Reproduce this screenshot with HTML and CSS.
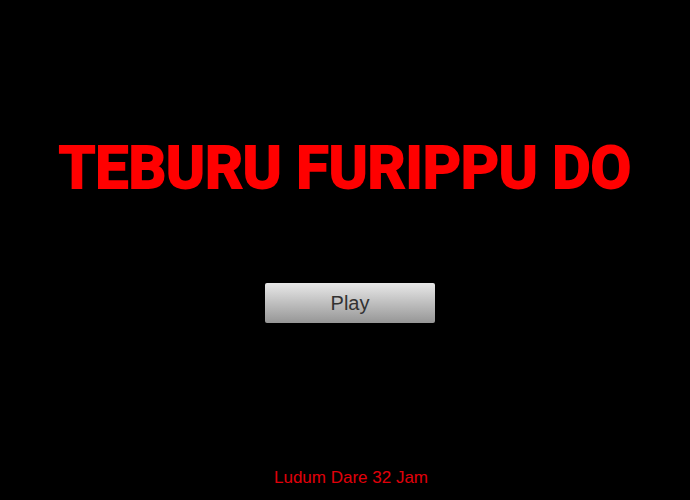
FILE: index.html
```html
<!DOCTYPE html>
<html lang="en">
<head>
  <meta charset="utf-8">
  <title>Teburu Furippu Do</title>
  <link rel="stylesheet" href="styles.css">
</head>
<body>

  <main class="menu">
    <h1 class="title">TEBURU FURIPPU DO</h1>
    <button type="button" class="play">Play</button>
  </main>

  <footer class="credit">Ludum Dare 32 Jam</footer>

</body>
</html>
```

FILE: styles.css
```css
body {
  display: flex;
  flex-direction: column;
  min-height: 100vh;
  margin: 0;
  background-color: #000;
  font-family: "Liberation Sans", Arial, sans-serif;
}

.menu {
  flex: 1;
  display: flex;
  flex-direction: column;
  align-items: center;
  gap: 80px;
  padding-top: 133px;
}

.title {
  margin: 0;
  color: #f00;
  font-family: Roboto, sans-serif;
  font-size: 59px;
  font-weight: bold;
  line-height: 70px;
  white-space: nowrap;
  -webkit-text-stroke: 2px #f00;
}

.play {
  width: 170px;
  height: 40px;
  margin-left: 10px;
  padding: 0;
  border: 0;
  border-radius: 2px;
  background: linear-gradient(#e8e8e8, #969696);
  color: #323232;
  font-family: inherit;
  font-size: 20px;
  cursor: pointer;
}

.credit {
  padding: 0 0 12px 12px;
  color: #e0000a;
  font-size: 17px;
  line-height: 20px;
  text-align: center;
}
```
